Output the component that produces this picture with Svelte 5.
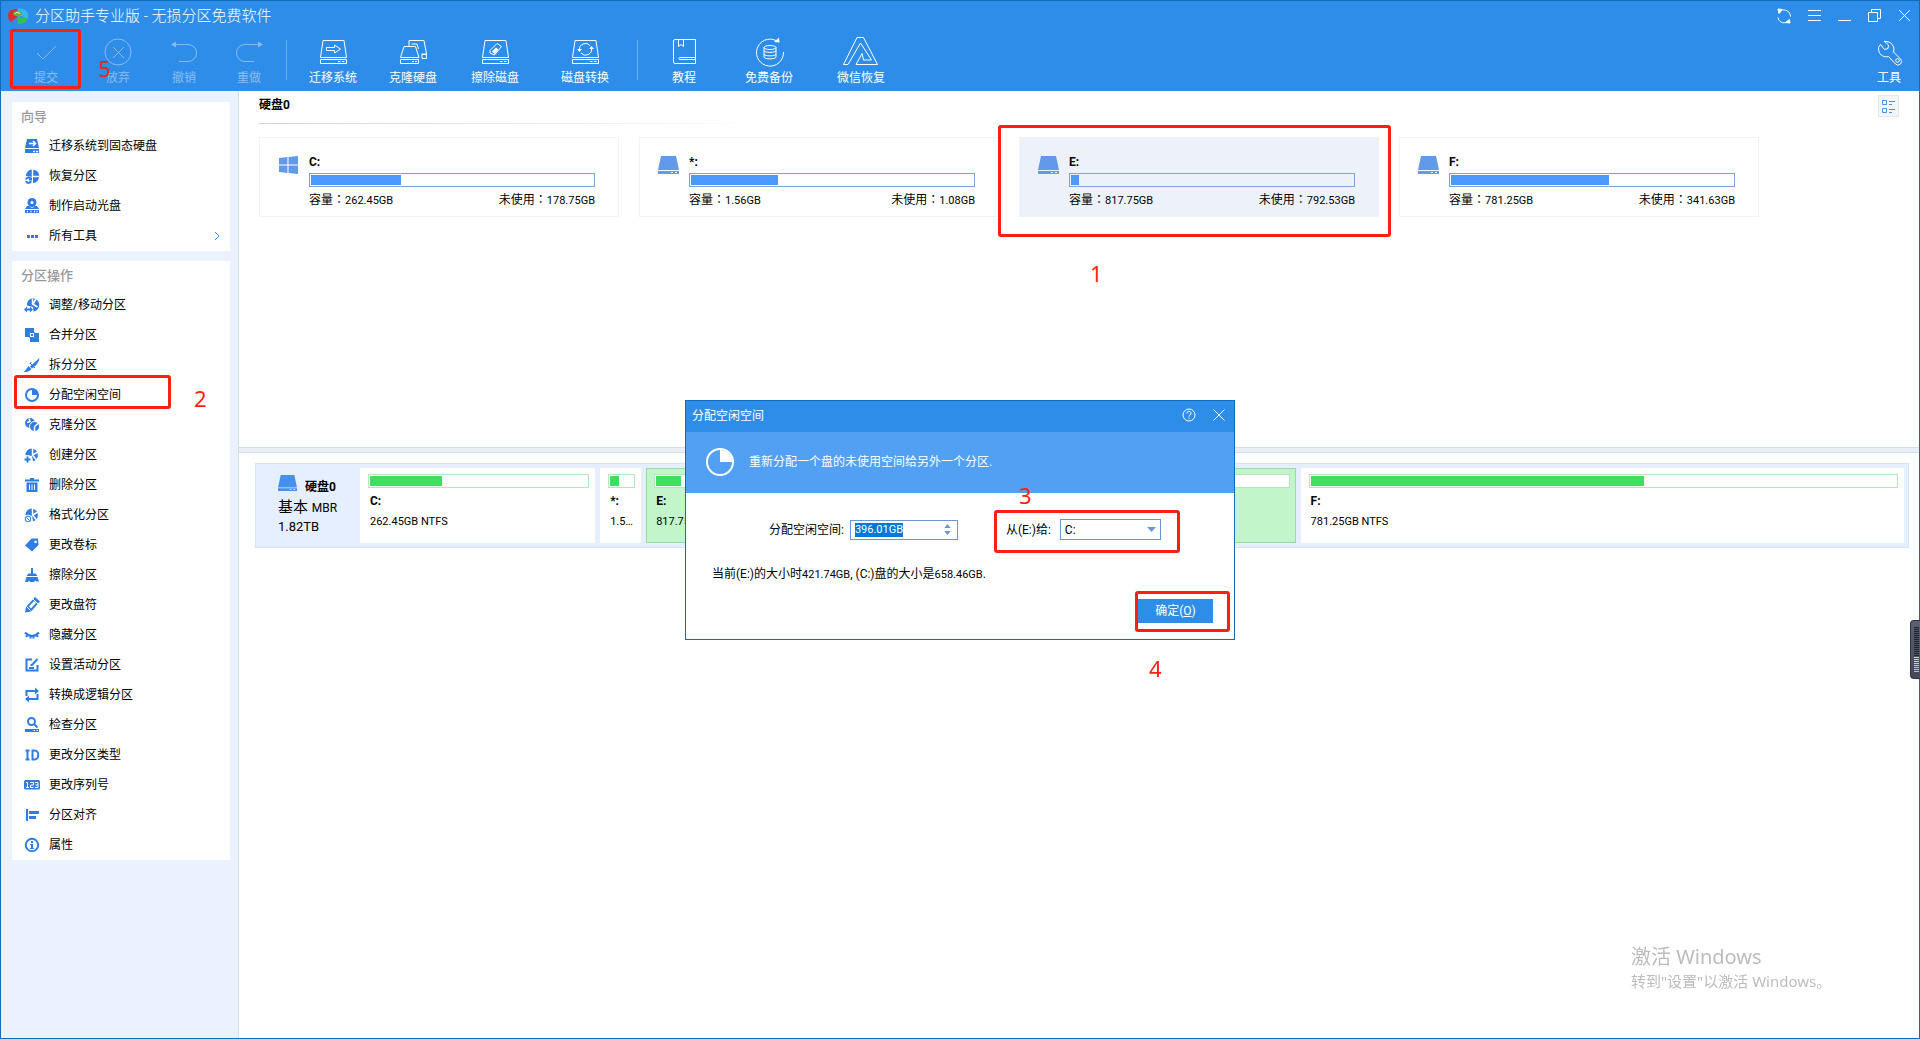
<script>
  const tools = [
    { label: '提交', icon: 'check', off: true, step: true },
    { label: '放弃', icon: 'discard', off: true },
    { label: '撤销', icon: 'undo', off: true },
    { label: '重做', icon: 'redo', off: true },
    null,
    { label: '迁移系统', icon: 'migrate' },
    { label: '克隆硬盘', icon: 'clone' },
    { label: '擦除磁盘', icon: 'erase' },
    { label: '磁盘转换', icon: 'convert' },
    null,
    { label: '教程', icon: 'book' },
    { label: '免费备份', icon: 'backup' },
    { label: '微信恢复', icon: 'recover' },
  ];

  const groups = [
    {
      title: '向导',
      items: [
        ['ssd', '迁移系统到固态硬盘'],
        ['restore', '恢复分区'],
        ['disc', '制作启动光盘'],
        ['more', '所有工具'],
      ],
    },
    {
      title: '分区操作',
      items: [
        ['resize', '调整/移动分区'],
        ['merge', '合并分区'],
        ['split', '拆分分区'],
        ['allocate', '分配空闲空间'],
        ['copy', '克隆分区'],
        ['create', '创建分区'],
        ['trash', '删除分区'],
        ['format', '格式化分区'],
        ['tag', '更改卷标'],
        ['wipe', '擦除分区'],
        ['pencil', '更改盘符'],
        ['hide', '隐藏分区'],
        ['active', '设置活动分区'],
        ['logical', '转换成逻辑分区'],
        ['inspect', '检查分区'],
        ['id', '更改分区类型'],
        ['serial', '更改序列号'],
        ['align', '分区对齐'],
        ['info', '属性'],
      ],
    },
  ];

  const volumes = [
    { name: 'C:', size: '262.45GB', free: '178.75GB', used: 32, win: true },
    { name: '*:', size: '1.56GB', free: '1.08GB', used: 31 },
    { name: 'E:', size: '817.75GB', free: '792.53GB', used: 3, selected: true },
    { name: 'F:', size: '781.25GB', free: '341.63GB', used: 56 },
  ];

  // grow: share of the strip left over after each block's own padding
  const parts = [
    { name: 'C:', text: '262.45GB NTFS', grow: 221, used: 33 },
    { name: '*:', text: '1.56GB NTFS', grow: 27, used: 39 },
    { name: 'E:', text: '817.75GB NTFS', grow: 635, used: 4, selected: true },
    { name: 'F:', text: '781.25GB NTFS', grow: 589, used: 57 },
  ];

  let amount = $state('396.01GB');
  let target = $state('C:');

  function selectAll(node) {
    node.focus();
    node.select();
  }
</script>

{#snippet toolIcon(name)}
  <svg class="tool-icon" viewBox="0 0 36 30" aria-hidden="true">
    {#if name === 'check'}
      <path d="M9 16l6 6L28 9" />
    {:else if name === 'discard'}
      <circle cx="18" cy="15" r="13" /><path d="M13 10l11 11M24 10L13 21" />
    {:else if name === 'undo'}
      <path d="M8 7.500H22a8.500 8.500 0 0 1 0 17H13" /><path class="solid" d="M5 7.500l5-3v6z" />
    {:else if name === 'redo'}
      <path d="M28 7.500H14a8.500 8.500 0 0 0 0 17h9" /><path class="solid" d="M32 7.500l-5-3v6z" />
    {:else if name === 'migrate' || name === 'erase' || name === 'convert'}
      <path d="M8 3.500h21l2.500 17h-26zM5.500 22.500h26v4h-26zM23 24.500h2.500M27 24.500h2.500" />
      {#if name === 'migrate'}
        <path d="M11.500 10.500h8V8l6 4-6 4v-2.500h-8z" />
      {:else if name === 'erase'}
        <path d="M13 13.500l7-7 4.500 3-7 8.500-4.500-2z" /><path class="solid" d="M15 14.500l4-4 2.500 2-4 4.500z" />
      {:else}
        <path d="M12.500 13a6 6 0 0 1 10.500-4.500M24.500 11a6 6 0 0 1-10.500 5" />
        <path class="solid" d="M10 12h5l-2.500 3zM22 12h5l-2.500-3z" />
      {/if}
    {:else if name === 'clone'}
      <path d="M9 9.500h11.500l3.500 11H5.500zM5.500 22.500h18v4h-18zM17 24.500h2M20 24.500h2" />
      <path d="M14 9V3.500h15l2.500 13.500h-5M23.500 12l-1.500-5h-5.500M27 17.500h4.500v4H27z" />
    {:else if name === 'book'}
      <path d="M9 2.500h20.500v24H9a1.500 1.500 0 0 1-1.500-1.500V4A1.500 1.500 0 0 1 9 2.500zM12.500 2.500v7l2.500-2 2.500 2v-7M29.500 20.500H14a1 1 0 0 0 0 2h15.500" />
    {:else if name === 'backup'}
      <path d="M25 3.500A13.500 13.500 0 1 0 32.500 15" /><path class="solid" d="M23 5l5-4.500.5 5z" />
      <ellipse cx="19" cy="10.500" rx="6" ry="2" />
      <path d="M13 10.500v9.500c0 2.500 12 2.500 12 0v-9.500M13 13.500c0 2.500 12 2.500 12 0M13 17c0 2.500 12 2.500 12 0" />
    {:else if name === 'recover'}
      <path d="M.5 27.500L14 .5h6.500l14 27H13l6-11 1.500 6.500h8L17.500 6 5 27.500z" />
    {:else if name === 'wrench'}
      <path d="M14 4.500a8 8 0 0 1 8.500 10.500l7 7a3.500 3.500 0 0 1-5 5l-7-7.500C12 21 7 17 7.500 10.500l2-3 4 5 3.500-1 .5-3.500-4.500-4z" />
      <circle cx="26.500" cy="23.500" r="1.800" />
    {/if}
  </svg>
{/snippet}

{#snippet pieBase()}
  <path d="M7.500 1.500a6.500 6.500 0 0 1 1.500 12.800L8 9 1.500 8A6.500 6.500 0 0 1 7.500 1.500z" />
  <path class="cut" d="M8.500 1v7L14 5M8.500 8l4 5" />
{/snippet}

{#snippet sideIcon(name)}
  <svg class="side-icon" viewBox="0 0 16 16" aria-hidden="true">
    {#if name === 'ssd'}
      <path d="M3 1h10l2 9H1zM1 11h14v4H1z" /><path class="cut" d="M5 5.500h6M9 3l2.500 2.500L9 8M9 13.500h2M12 13.500h2" />
    {:else if name === 'restore'}
      <path d="M8 1.500A6.500 6.500 0 1 1 9 15V9L2 8a6.500 6.500 0 0 1 6-6.500z" />
      <path class="cut" d="M8.500 1v7.500H15" /><path class="line" d="M2 11.500a2.600 2.600 0 0 1 5 0M7 13a2.600 2.600 0 0 1-5 0M7 9.500v2H5" />
    {:else if name === 'disc'}
      <circle cx="8" cy="4.500" r="4.500" /><path d="M3 8h2l3 2 3-2h2l2 3H1zM1 12h14v3H1z" />
      <circle class="hole" cx="8" cy="4.500" r="1.500" /><path class="cut" d="M3 13.500h1M6.500 13.500h1M10 13.500h1M12.500 13.500h1" />
    {:else if name === 'more'}
      <path d="M3 7h3v3H3zM7 7h3v3H7zM11 7h3v3h-3z" />
    {:else if name === 'resize'}
      <path d="M8 1.500a6.500 6.500 0 0 1 1.500 13L9 10 3 8.500A6 6 0 0 1 8 1.500z" /><path class="cut" d="M8.500 2v5l5 3M9 7l3-5" />
      <path d="M0 12.500l3-3v2h3v-2l3 3-3 3v-2H3v2z" />
    {:else if name === 'merge'}
      <path d="M1 1h9v4H5v5H1z" /><path d="M11 6h4v9H6v-4h5z" /><path d="M7 7h2v2H7z" /><path class="thin" d="M5.500 5.500h5v5h-5z" />
    {:else if name === 'split'}
      <path d="M15.500 1L6 9.500l2 2C12 9 15 5 15.500 1zM0 15l4.500-6 3 3C5.500 14.500 3 15 0 15z" /><path class="thin" d="M6 6l5 5M7 5l-1 2" />
    {:else if name === 'allocate'}
      <circle class="line" cx="8" cy="8" r="6" /><path d="M8 2.500V8h5.500A5.500 5.500 0 0 0 8 2.500z" />
    {:else if name === 'copy'}
      <circle cx="6" cy="6" r="5" /><circle class="halo" cx="10.500" cy="9.500" r="5" /><path class="cut" d="M10.500 9.500v5M10.500 9.500l3.500-3M5 1.500l1 3-3 1" />
    {:else if name === 'create'}
      <g>{@render pieBase()}</g><path class="cut" d="M4.500 8v7.500M1 12h7" /><path class="line" d="M3.500 9.500v6M.5 12.500h6" />
    {:else if name === 'trash'}
      <path d="M6 1h4v1.500h5v2H1v-2h5zM2.500 5.500h11V15h-11z" /><path class="slit" d="M5.500 7.500V13M8 7.500V13M10.500 7.500V13" />
    {:else if name === 'format'}
      <g>{@render pieBase()}</g><circle class="halo" cx="4" cy="12" r="3.800" /><circle class="hole" cx="4" cy="12" r="2.200" /><path class="thin" d="M2.500 10.500l3 3" />
    {:else if name === 'tag'}
      <path fill-rule="evenodd" d="M7.500 1.500L14 1.500 14.500 8 8 14.500 1 8.500zM11.500 3.500a1.300 1.300 0 1 0 .1 0z" />
    {:else if name === 'wipe'}
      <path d="M7 1h2v5.500h2.500L13.500 9h-11l2-2.500H7zM2.500 10h11l1.500 4.500h-2.500l-1-1-1.500 1.500H6l-1-1.500-1 1.500H1z" />
    {:else if name === 'pencil'}
      <path fill-rule="evenodd" d="M11 0l5 4.500-9 10L1 15.500l1-5.500zM10 4L5 9.500l2 2 5-5.500z" />
      <path class="slit" d="M9 2l5 5M2.500 9.500l4 4" />
    {:else if name === 'hide'}
      <path class="line" d="M1 5.500c4 4.500 10 4.500 14 0M3.500 8l-1.500 2M6.500 9v2.500M9.500 9v2.500M12.500 8l1.500 2" />
    {:else if name === 'active'}
      <path class="line" d="M8 2.500H2.500v11h11V8M5 11h5M13.500 2L8 8H6.500" />
    {:else if name === 'logical'}
      <path class="line" d="M2.500 9V4h9M13.500 7v5h-9" /><path d="M11 .5L15 4l-4 3.500zM5 8.500L1 12l4 3.500z" />
    {:else if name === 'inspect'}
      <circle class="line" cx="7.500" cy="4.500" r="3.500" /><path class="line" d="M10 7l3.500 3.500" /><path d="M1 12h14v3H1z" /><path class="slit" d="M9.500 13.500h1.500M12.500 13.500H14" />
    {:else if name === 'id'}
      <path class="line" d="M1.500 3.500h4M3.500 3.500v9M1.500 12.500h4M8.500 3.500v9h2c5 0 5-9 0-9z" />
    {:else if name === 'serial'}
      <rect x="0" y="3" width="16" height="9.500" rx="1.500" /><path class="slit" d="M2 5.500h1.500v5M2 10.500h3M6 5.500h3.500V8H6.500v2.500h3M11 5.500h3v5h-3M11.500 8H14" />
    {:else if name === 'align'}
      <path d="M2 2h2v12H2zM5 4h10v3H5zM5 9h7v3H5z" />
    {:else if name === 'info'}
      <circle class="line" cx="8" cy="8" r="6.200" /><path d="M7 4h2v2H7zM6 7h3v4h1v1H6v-1h1V8H6z" />
    {/if}
  </svg>
{/snippet}

{#snippet drive(cls)}
  <svg class={cls} viewBox="0 0 21 18" preserveAspectRatio="none" aria-hidden="true">
    <path d="M3 0h15l3 14H0zM0 15h21v3H0z" />
    <path class="led" d="M13 16h2v1h-2zM17 16h2v1h-2z" />
  </svg>
{/snippet}

<div class="window">
  <header>
    <div class="titlebar">
      <svg class="logo" viewBox="0 0 20 17" aria-hidden="true">
        <path d="M0 7C0 3 4 1 9 1v8l-6 5C1 12 0 10 0 7z" fill="#d62f2f" />
        <path d="M10 .5c6 0 10 2 10 6V11l-6-3-4 1z" fill="#35b9ee" />
        <path d="M9 9l10 1c0 4-3 6-9 6.500z" fill="#35c24f" />
        <ellipse cx="9.500" cy="5.500" rx="4.500" ry="2.500" fill="#6fae2d" />
        <path d="M7 6c1-2 4-2 5 0" fill="none" stroke="#fff" />
      </svg>
      <h1>分区助手专业版 - 无损分区免费软件</h1>
      <div class="controls">
        <button aria-label="刷新"><svg viewBox="0 0 16 16"><path d="M2 9.500A6 6 0 0 0 11 14M2.500 4.500L5 3M7 2a6.500 6.500 0 0 1 7.500 6.500" /><path class="solid" d="M2 1l4.500.5L3 5.500zM14 15l-4.500-.5 4-3z" /></svg></button>
        <button aria-label="菜单"><svg viewBox="-1 0 16 16"><path d="M1 2.500h13M1 7.500h13M1 12.500h13" /></svg></button>
        <button aria-label="最小化"><svg viewBox="-1 0 16 16"><path d="M1 12.500h13" /></svg></button>
        <button aria-label="还原"><svg viewBox="-1 0 16 16"><path d="M1.500 4.500h9v9h-9zM4.500 4V1.500h9v9H11" /></svg></button>
        <button aria-label="关闭"><svg viewBox="-1 0 16 16"><path d="M2 2l11 11M13 2L2 13" /></svg></button>
      </div>
    </div>
    <div class="toolbar">
      <div class="tools">
        {#each tools as t}
          {#if t}
            <button class="tool" class:off={t.off}>
              {@render toolIcon(t.icon)}
              <span>{t.label}</span>
              {#if t.step}<i class="mark commit"></i><b class="step five">5</b>{/if}
            </button>
          {:else}
            <span class="sep"></span>
          {/if}
        {/each}
      </div>
      <button class="tool last">{@render toolIcon('wrench')}<span>工具</span></button>
    </div>
  </header>

  <div class="body">
    <aside>
      {#each groups as g}
        <nav aria-label={g.title}>
          <h2>{g.title}</h2>
          {#each g.items as [icon, label]}
            <button class="item">
              {@render sideIcon(icon)}
              <span>{label}</span>
              {#if icon === 'more'}
                <svg class="chev" viewBox="0 0 6 10"><path d="M1 1l4 4-4 4" /></svg>
              {/if}
              {#if icon === 'allocate'}<i class="mark alloc"></i><b class="step two">2</b>{/if}
            </button>
          {/each}
        </nav>
      {/each}
    </aside>

    <main>
      <section class="overview">
        <div class="heading">
          <h2>硬盘0</h2>
          <button class="view" aria-label="切换视图">
            <svg viewBox="0 0 15 15"><path d="M1.500 1.500h4v4h-4zM1.500 9.500h4v4h-4zM8 2.500h6M8 5.500h3M8 10.500h6M8 13.500h3" /></svg>
          </button>
        </div>
        <div class="rule"></div>
        <div class="cards">
          {#each volumes as v}
            <article class="card" class:selected={v.selected}>
              {#if v.win}
                <svg class="winlogo" viewBox="0 0 18 17" aria-hidden="true"><path d="M0 2l8-1v7H0zM9 1l9-1v8H9zM0 9h8v7l-8-1zM9 9h9v8l-9-1z" /></svg>
              {:else}
                {@render drive('drive')}
              {/if}
              <div class="info">
                <h3>{v.name}</h3>
                <div class="bar"><div class="fill" style:width="{v.used}%"></div></div>
                <div class="stats">
                  <span>容量<span class="colon">：</span><span class="num">{v.size}</span></span>
                  <span>未使用<span class="colon">：</span><span class="num">{v.free}</span></span>
                </div>
              </div>
              {#if v.selected}<i class="mark volume"></i><b class="step one">1</b>{/if}
            </article>
          {/each}
        </div>
      </section>

      <div class="splitter"></div>

      <section class="map">
        <div class="disk">
          <div class="summary">
            <div class="diskname">{@render drive('drive bright')}<b>硬盘0</b></div>
            <div class="kind">基本 <span>MBR</span></div>
            <div class="total">1.82TB</div>
          </div>
          {#each parts as p}
            <div class="part" class:selected={p.selected} style:flex-grow={p.grow}>
              <div class="usage"><div class="fill" style:width="{p.used}%"></div></div>
              <h3>{p.name}</h3>
              <p>{p.text}</p>
            </div>
          {/each}
        </div>
      </section>
    </main>
  </div>

  <div class="overlay">
    <dialog open aria-labelledby="dlg-title">
      <div class="dlg-title">
        <h2 id="dlg-title">分配空闲空间</h2>
        <button aria-label="帮助"><svg viewBox="0 0 14 14"><circle cx="7" cy="7" r="6" /><path d="M5 5.500a2 2 0 1 1 3 1.500q-1 .5-1 1.500M7 9.500v1.300" /></svg></button>
        <button aria-label="关闭对话框"><svg viewBox="0 0 14 14"><path d="M1.500 1.500l11 11M12.500 1.500l-11 11" /></svg></button>
      </div>
      <div class="banner">
        <svg viewBox="0 0 30 30" aria-hidden="true"><circle cx="15" cy="15" r="13" /><path d="M15 3v12h12A12 12 0 0 0 15 3z" /></svg>
        <p>重新分配一个盘的未使用空间给另外一个分区.</p>
      </div>
      <form onsubmit={(e) => e.preventDefault()}>
        <div class="fields">
          <label for="amount">分配空闲空间:</label>
          <div class="spin">
            <input id="amount" type="text" bind:value={amount} use:selectAll />
            <div class="arrows">
              <button type="button" aria-label="增加"><svg viewBox="0 0 8 5"><path d="M4 0l4 5H0z" /></svg></button>
              <button type="button" aria-label="减少"><svg viewBox="0 0 8 5"><path d="M4 5l4-5H0z" /></svg></button>
            </div>
          </div>
          <div class="target">
            <label for="target">从(E:)给:</label>
            <div class="pick">
              <select id="target" bind:value={target}>
                <option>C:</option>
                <option>F:</option>
              </select>
              <svg viewBox="0 0 9 5" aria-hidden="true"><path d="M0 0h9L4.500 5z" /></svg>
            </div>
            <i class="mark from"></i><b class="step three">3</b>
          </div>
        </div>
        <p class="result">
          当前(E:)的大小时<span class="num">421.74GB</span>, (C:)盘的大小是<span class="num">658.46GB</span>.
        </p>
        <div class="actions">
          <div class="okwrap">
            <button class="ok" type="submit">确定(<u>O</u>)</button>
            <i class="mark okmark"></i><b class="step four">4</b>
          </div>
        </div>
      </form>
    </dialog>
  </div>

  <div class="watermark">
    <div>激活 Windows</div>
    <small>转到"设置"以激活 Windows。</small>
  </div>

  <div class="meter" aria-hidden="true"><div></div></div>
</div>

<style>
  :global(body) {
    margin: 0;
    background: #fff;
  }
  * {
    box-sizing: border-box;
  }
  .window {
    position: relative;
    display: flex;
    flex-direction: column;
    min-height: 100vh;
    border: 1px solid #106bb8;
    font-family: Roboto, 'Noto Sans CJK SC', sans-serif;
    font-size: 12px;
    line-height: 16px;
    color: #000;
    background: #fff;
  }
  button {
    font: inherit;
    color: inherit;
    background: none;
    border: 0;
    padding: 0;
  }
  h1, h2, h3, p {
    margin: 0;
  }
  svg {
    display: block;
    flex: none;
  }
  .num {
    font-size: 11px;
    line-height: 1;
  }

  header {
    background: #2e8de8;
    color: #fff;
  }
  header svg path, header svg circle, header svg ellipse {
    stroke-width: 1;
  }
  .titlebar {
    display: flex;
    align-items: center;
    height: 30px;
    padding: 0 0 0 7px;
  }
  .logo {
    width: 20px;
    height: 17px;
  }
  h1 {
    margin-left: 7px;
    font-size: 15px;
    line-height: 20px;
    font-weight: 300;
  }
  .controls {
    display: flex;
    margin-left: auto;
  }
  .controls button {
    width: 30px;
    height: 30px;
    display: grid;
    place-items: center;
  }
  .controls svg {
    width: 16px;
    height: 16px;
    fill: none;
    stroke: #fff;
  }
  .solid {
    fill: #fff;
  }
  .toolbar {
    display: flex;
    justify-content: space-between;
    height: 60px;
    padding: 0 9px;
  }
  .tools {
    display: grid;
    grid-template-columns: 72px 72px 60px 70px 4px 90px 70px 94px 86px 18px 76px 94px 90px;
  }
  .sep {
    justify-self: center;
    width: 1px;
    height: 40px;
    margin-top: 9px;
    background: #69aeef;
  }
  .tool {
    position: relative;
    display: flex;
    flex-direction: column;
    align-items: center;
    gap: 3px;
    padding-top: 6px;
    white-space: nowrap;
  }
  .tool.last {
    width: 42px;
  }
  .tool-icon {
    width: 36px;
    height: 30px;
    fill: none;
    stroke: #fff;
  }
  .tool-icon .solid {
    stroke: none;
  }
  .off > svg, .off > span {
    opacity: 0.42;
  }

  .body {
    flex: 1;
    display: flex;
  }
  aside {
    flex: none;
    width: 238px;
    padding: 11px 8px 11px 11px;
    background: #eaf2ff;
    border-right: 1px solid #d3dde9;
  }
  nav {
    background: #fff;
  }
  nav + nav {
    margin-top: 10px;
  }
  nav h2 {
    height: 29px;
    padding: 0 9px;
    line-height: 30px;
    font-size: 13px;
    font-weight: 500;
    color: #999;
  }
  .item {
    position: relative;
    display: flex;
    align-items: center;
    gap: 9px;
    width: 100%;
    height: 30px;
    padding: 0 10px 0 12px;
    text-align: left;
  }
  .side-icon {
    width: 16px;
    height: 16px;
    fill: #2f7de3;
  }
  .side-icon .line {
    fill: none;
    stroke: #2f7de3;
    stroke-width: 2;
  }
  .side-icon .thin {
    fill: none;
    stroke: #2f7de3;
  }
  .side-icon .cut {
    fill: none;
    stroke: #fff;
    stroke-width: 1.500;
  }
  .side-icon .slit {
    fill: none;
    stroke: #fff;
  }
  .side-icon .hole {
    fill: #fff;
  }
  .side-icon .halo {
    stroke: #fff;
  }
  .chev {
    width: 6px;
    height: 10px;
    margin-left: auto;
    fill: none;
    stroke: #3d92e6;
  }

  main {
    flex: 1;
    min-width: 0;
    display: flex;
    flex-direction: column;
  }
  .overview {
    flex: 352 1 0px;
    padding: 4px 20px 0 20px;
  }
  .heading {
    display: flex;
    justify-content: space-between;
    align-items: flex-start;
    height: 28px;
  }
  .heading h2 {
    font-size: 12px;
    line-height: 20px;
  }
  .view {
    display: grid;
    place-items: center;
    width: 21px;
    height: 22px;
    background: #f3f7fb;
    border: 1px solid #e4e9f1;
  }
  .view svg {
    width: 15px;
    height: 15px;
    fill: none;
    stroke: #4d8de0;
  }
  .rule {
    width: 520px;
    height: 1px;
    background: linear-gradient(90deg, #d3d3dc, #fff);
  }
  .cards {
    display: flex;
    flex-wrap: wrap;
    gap: 20px;
    margin-top: 13px;
  }
  .card {
    position: relative;
    display: flex;
    gap: 10px;
    width: 360px;
    padding: 15px 23px 8px 18px;
    border: 1px solid #f2f3f5;
  }
  .card.selected {
    background: #edf2fa;
    border-color: #edf2fa;
  }
  .drive, .winlogo {
    width: 21px;
    height: 18px;
    margin-top: 3px;
    fill: #6299ea;
  }
  .led {
    fill: #fff;
  }
  .info {
    flex: 1;
  }
  .info h3 {
    font-size: 12px;
    line-height: 18px;
  }
  .bar {
    height: 14px;
    margin: 2px 0 5px;
    padding: 1px;
    border: 1px solid #7da3d8;
  }
  .bar .fill {
    height: 100%;
    background: #4b98ff;
  }
  .stats {
    display: flex;
    justify-content: space-between;
    height: 16px;
  }
  .colon {
    font-family: 'Noto Sans CJK TC', sans-serif;
    line-height: 1;
  }
  .splitter {
    height: 6px;
    background: #eaeff6;
    border-top: 1px solid #d4deea;
    border-bottom: 1px solid #d4deea;
  }
  .map {
    flex: 575 1 0px;
    padding: 10px 10px 0 16px;
  }
  .disk {
    display: flex;
    gap: 5px;
    padding: 4px;
    background: #e5efff;
    border: 1px solid #d7e4f5;
  }
  .summary {
    flex: none;
    width: 95px;
    padding: 7px 0 0 18px;
  }
  .diskname {
    display: flex;
    gap: 8px;
    line-height: 24px;
    height: 22px;
  }
  .drive.bright {
    width: 19px;
    height: 16px;
    margin: 0;
    fill: #448ff0;
  }
  .kind {
    font-size: 15px;
    line-height: 20px;
  }
  .kind span {
    font-size: 12px;
  }
  .total {
    font-size: 13px;
    line-height: 18px;
  }
  .part {
    flex: 1 1 0px;
    min-width: 0;
    height: 75px;
    padding: 6px 6px 0 8px;
    background: #fff;
  }
  .part.selected {
    padding: 5px 5px 0 7px;
    background: #c2f5ca;
    border: 1px solid #97dca6;
  }
  .usage {
    height: 14px;
    padding: 1px;
    background: #fff;
    border: 1px solid #b5e6bf;
  }
  .usage .fill {
    height: 100%;
    background: #3bdf62;
  }
  .part h3 {
    margin: 5px 2px 4px;
    font-size: 12px;
    line-height: 16px;
  }
  .part p {
    margin: 0 0 0 2px;
    font-size: 11px;
    line-height: 18px;
    white-space: nowrap;
    overflow: hidden;
    text-overflow: ellipsis;
  }

  .overlay {
    position: fixed;
    inset: 0;
    display: grid;
    place-items: center;
    pointer-events: none;
  }
  dialog {
    position: relative;
    inset: auto;
    width: 550px;
    margin: 0;
    padding: 0;
    color: #000;
    background: #fff;
    border: 1px solid #106bb8;
    pointer-events: auto;
  }
  .dlg-title {
    display: flex;
    align-items: center;
    gap: 16px;
    height: 31px;
    padding: 0 8px 0 6px;
    background: #2e8de8;
    color: #fff;
  }
  .dlg-title h2 {
    flex: 1;
    font-size: 12px;
    font-weight: 400;
  }
  .dlg-title svg {
    width: 14px;
    height: 14px;
    margin-bottom: 2px;
    fill: none;
    stroke: #fff;
  }
  .banner {
    display: flex;
    align-items: center;
    gap: 14px;
    height: 61px;
    padding: 0 19px;
    background: #52a0f4;
    color: #fff;
  }
  .banner svg {
    width: 30px;
    height: 30px;
    fill: #fff;
  }
  .banner circle {
    fill: none;
    stroke: #fff;
    stroke-width: 2;
  }
  form {
    padding: 26px 21px 16px 26px;
  }
  .fields {
    display: flex;
    align-items: center;
    height: 22px;
    padding-left: 57px;
  }
  .fields label {
    white-space: nowrap;
  }
  .spin {
    display: flex;
    width: 108px;
    height: 20px;
    margin-left: 6px;
    border: 1px solid #6896d6;
  }
  .spin input {
    flex: 1;
    min-width: 0;
    height: 14px;
    margin: 2px 0 0 4px;
    padding: 0;
    border: 0;
    outline: 0;
    font: inherit;
    font-size: 11px;
    line-height: 14px;
  }
  .spin input::selection {
    color: #fff;
    background: #0078d7;
  }
  .arrows {
    display: flex;
    flex-direction: column;
    justify-content: center;
    gap: 3px;
    width: 18px;
    align-items: center;
  }
  .arrows svg {
    width: 7px;
    height: 4px;
    fill: #6896d6;
  }
  .target {
    position: relative;
    display: flex;
    align-items: center;
    gap: 9px;
    margin-left: 48px;
  }
  .pick {
    position: relative;
  }
  .pick select {
    display: block;
    appearance: none;
    width: 101px;
    height: 21px;
    padding: 0 4px;
    border: 1px solid #6896d6;
    border-radius: 0;
    background: #fff;
    color: #000;
    font: inherit;
  }
  .pick svg {
    position: absolute;
    right: 5px;
    top: 8px;
    width: 9px;
    height: 5px;
    fill: #6896d6;
    pointer-events: none;
  }
  .result {
    margin-top: 25px;
  }
  .actions {
    display: flex;
    justify-content: flex-end;
    margin-top: 17px;
  }
  .okwrap {
    position: relative;
  }
  .ok {
    display: block;
    width: 75px;
    height: 24px;
    background: #2e8de8;
    color: #fff;
  }

  .mark {
    position: absolute;
    border: 3px solid #ff1f12;
    border-radius: 3px;
    pointer-events: none;
  }
  .step {
    position: absolute;
    font-family: 'Noto Sans', sans-serif;
    font-size: 22px;
    font-weight: 400;
    line-height: 24px;
    color: #ff1f12;
  }
  .commit { left: 0; top: -2px; width: 71px; height: 60px; }
  .five { left: 88px; top: 25px; z-index: 1; }
  .alloc { left: 2px; top: -5px; width: 157px; height: 34px; }
  .two { left: 182px; top: 6px; }
  .volume { left: -22px; top: -13px; width: 393px; height: 112px; }
  .one { left: 70px; top: 123px; }
  .from { left: -12px; top: -9px; width: 186px; height: 43px; }
  .three { left: 13px; top: -36px; }
  .okmark { left: -3px; top: -8px; width: 95px; height: 41px; }
  .four { left: 11px; top: 57px; }

  .watermark {
    position: absolute;
    right: 88px;
    bottom: 46px;
    width: 200px;
    color: #bcbcbc;
    font-family: 'Noto Sans', 'Noto Sans CJK SC', sans-serif;
    font-size: 20px;
    line-height: 26px;
    white-space: nowrap;
  }
  .watermark small {
    display: block;
    font-size: 15px;
    line-height: 22px;
  }
  .meter {
    position: absolute;
    right: -1px;
    top: 619px;
    width: 10px;
    height: 59px;
    padding: 6px 1px 6px 3px;
    background: linear-gradient(#5b6174, #444857);
    border: 1px solid #30343f;
    border-right: 0;
    border-radius: 4px 0 0 4px;
  }
  .meter div {
    height: 100%;
    background:
      repeating-linear-gradient(transparent 0 1px, #4d5263 1px 2px),
      linear-gradient(#20242d 0 66%, #b8ec9a 66%, #5fe8c8);
  }
</style>
